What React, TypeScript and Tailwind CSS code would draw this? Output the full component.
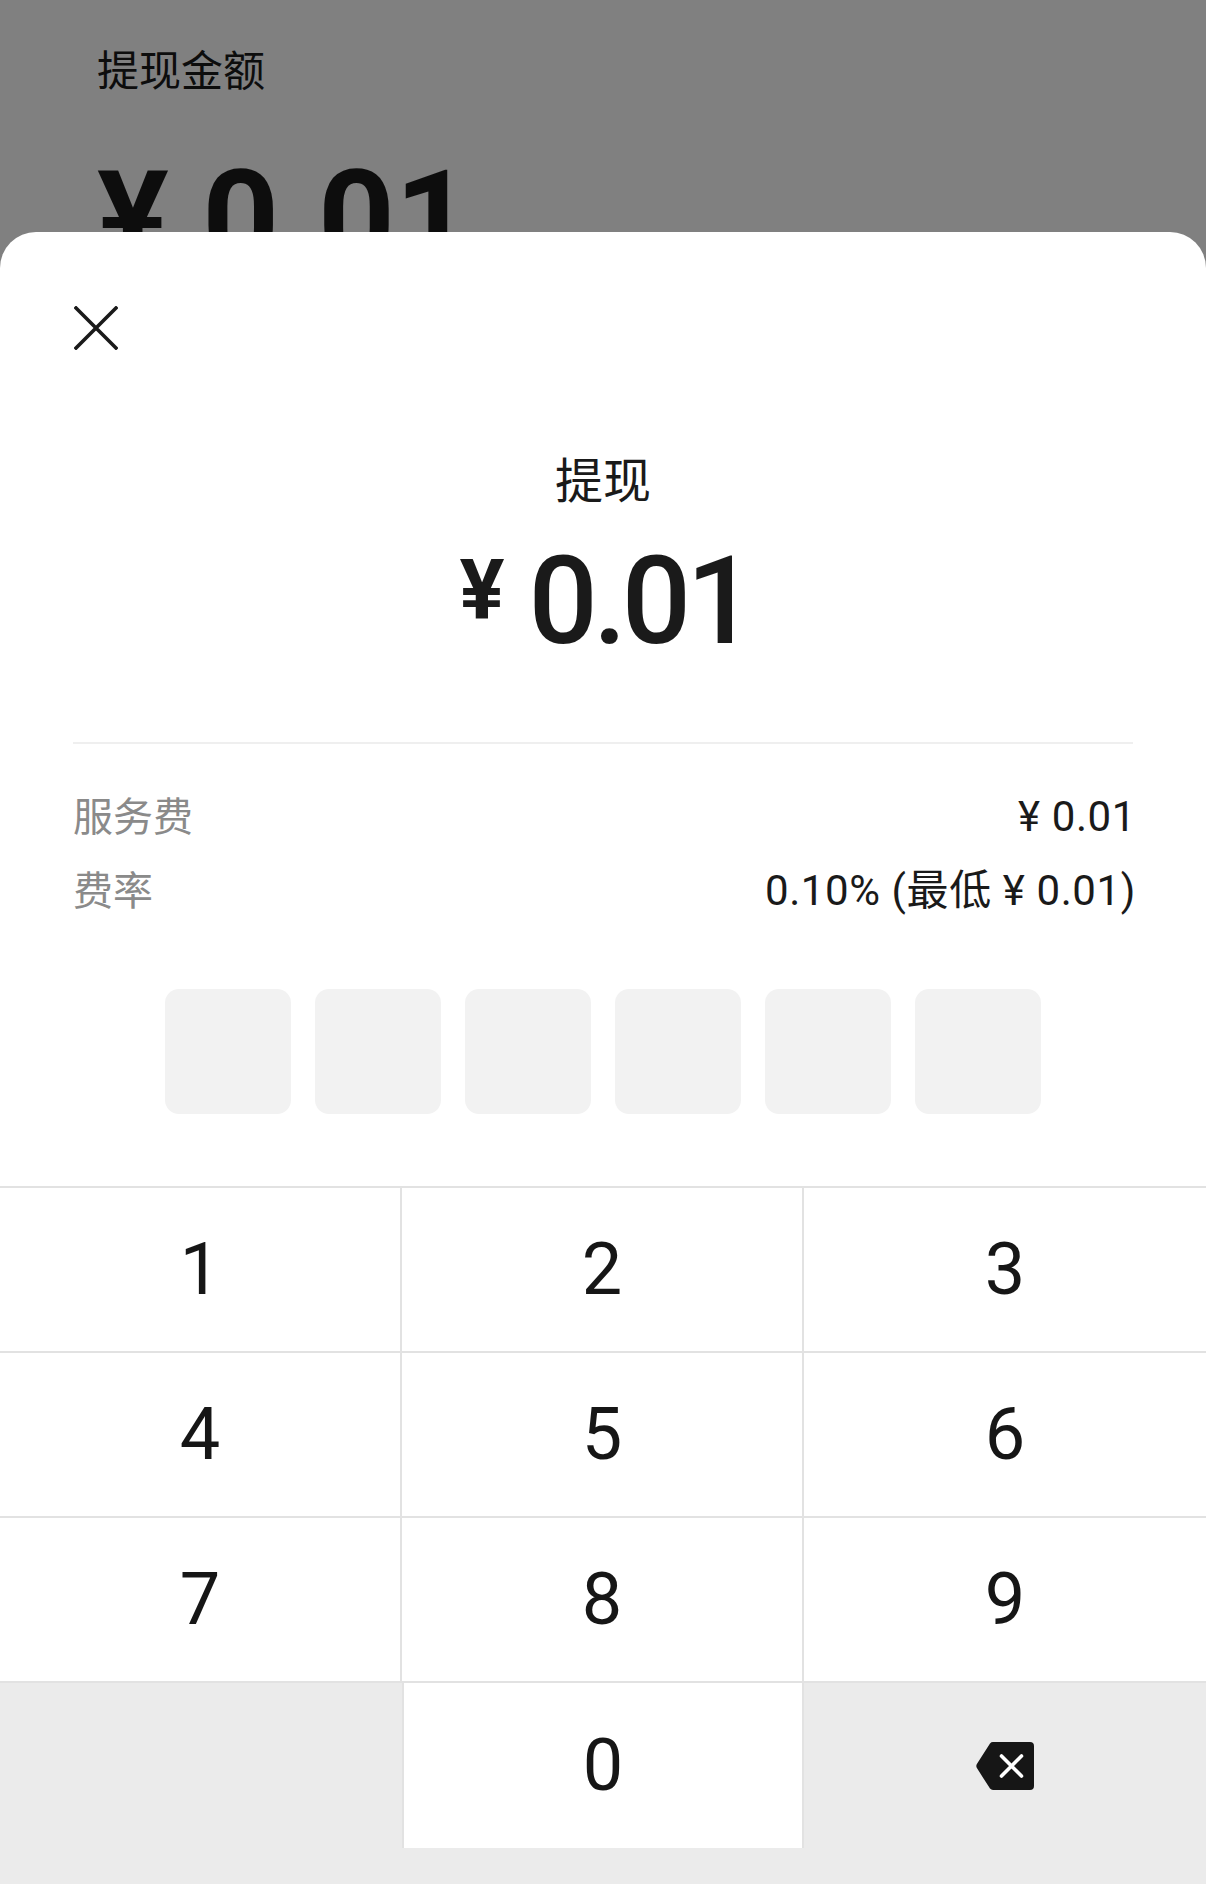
import React from 'react';

const cjk = "font-['Noto_Sans_CJK_SC',sans-serif]";
const num = "font-['Roboto','Noto_Sans_CJK_SC',sans-serif]";

const CloseIcon = () => (
  <svg width="44" height="44" viewBox="0 0 44 44" fill="none">
    <path d="M2 2 L42 42 M42 2 L2 42" stroke="#1a1a1a" strokeWidth="3.6" strokeLinecap="square" />
  </svg>
);

const BackspaceIcon = () => (
  <svg width="58" height="48" viewBox="0 0 58 48">
    <path
      d="M17 0 H54 A4 4 0 0 1 58 4 V44 A4 4 0 0 1 54 48 H17 A4 4 0 0 1 14 46.6 L1.2 26.6 A4.5 4.5 0 0 1 1.2 21.4 L14 1.4 A4 4 0 0 1 17 0 Z"
      fill="#161616"
    />
    <path d="M25.5 14 L45.5 34 M45.5 14 L25.5 34" stroke="#fff" strokeWidth="3.6" strokeLinecap="round" />
  </svg>
);

const keys = ['1', '2', '3', '4', '5', '6', '7', '8', '9'];

export default function App() {
  return (
    <div className="flex flex-col w-[1206px] h-[1884px] bg-[#808080] overflow-hidden">
      {/* page behind the sheet, dimmed */}
      <div className="h-[232px] shrink-0 overflow-hidden pl-[97px] pt-[47px] text-[#0d0d0d]">
        <div className={`${cjk} text-[42px] leading-none h-[42px]`}>提现金额</div>
        <div className={`${num} mt-[64px] text-[134px] leading-none font-bold`}>¥ 0.01</div>
      </div>

      {/* bottom sheet */}
      <div className="flex-1 flex flex-col bg-white rounded-t-[36px]">
        <div className="ml-[74px] mt-[74px] w-[44px] h-[44px]">
          <CloseIcon />
        </div>

        <div className={`${cjk} mt-[103px] h-[48px] text-[48px] leading-none text-center text-[#1a1a1a]`}>提现</div>

        <div className={`${num} mt-[40px] flex justify-center items-start text-[#1a1a1a] pl-[4px]`}>
          <span className="mt-[8px] text-[84px] leading-none font-bold">¥</span>
          <span className="ml-[24px] text-[122px] leading-none font-medium tracking-[-5px] h-[122px]">0.01</span>
        </div>

        <div className="mx-[73px] mt-[79px] h-[2px] bg-[#efefef]" />

        <div className="pl-[73px] pr-[70px] mt-[46px] flex flex-col gap-[26px]">
          <div className="h-[48px] flex items-center justify-between">
            <span className={`${cjk} text-[40px] leading-none text-[#8a8a8a]`}>服务费</span>
            <span className={`${num} mt-[6px] text-[42px] leading-none tracking-[0.6px] text-[#1a1a1a]`}>¥ 0.01</span>
          </div>
          <div className="h-[48px] flex items-center justify-between">
            <span className={`${cjk} text-[40px] leading-none text-[#8a8a8a]`}>费率</span>
            <span className={`${num} mt-[6px] text-[42px] leading-none tracking-[0.6px] text-[#1a1a1a]`}>
              0.10% (最低 ¥ 0.01)
            </span>
          </div>
        </div>

        <div className="mt-[77px] flex justify-center gap-[24px]">
          {[0, 1, 2, 3, 4, 5].map((i) => (
            <div key={i} className="w-[126px] h-[125px] rounded-[14px] bg-[#f2f2f2]" />
          ))}
        </div>

        <div className="mt-[72px] flex-1 flex flex-col bg-[#ebebeb] border-t-2 border-[#e2e2e2]">
          <div className="grid grid-cols-3">
            {keys.map((k, i) => (
              <div
                key={k}
                className={`${num} h-[165px] flex items-center justify-center bg-white border-b-2 border-[#e2e2e2] text-[72px] text-[#161616] ${
                  i % 3 !== 2 ? 'border-r-2' : ''
                }`}
              >
                {k}
              </div>
            ))}
            <div className="h-[165px]" />
            <div
              className={`${num} h-[165px] flex items-center justify-center bg-white border-x-2 border-[#e2e2e2] text-[72px] text-[#161616]`}
            >
              0
            </div>
            <div className="h-[165px] flex items-center justify-center">
              <BackspaceIcon />
            </div>
          </div>
        </div>
      </div>
    </div>
  );
}
